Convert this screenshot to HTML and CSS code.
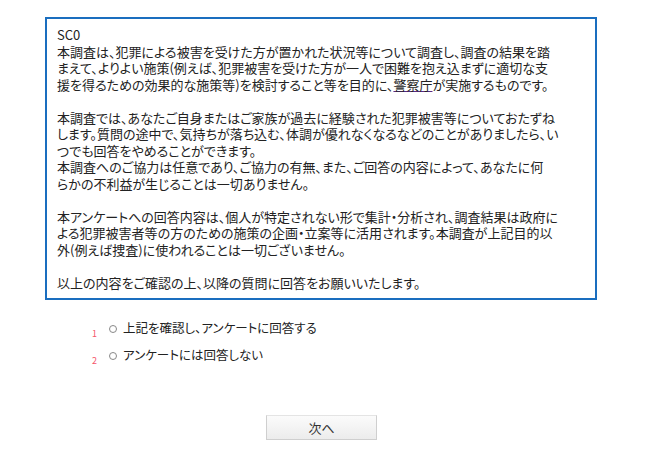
FILE: index.html
```html
<!DOCTYPE html>
<html lang="ja">
<head>
    <meta charset="UTF-8">
    <meta name="viewport" content="width=device-width, initial-scale=1.0">
    <title>犯罪被害に関する調査</title>
    <link rel="stylesheet" href="styles.css">
</head>
<body>
    <div class="survey">
        <!-- 設問文 -->
        <div class="question-box">
            <p>SC0<br>
            本調査は、犯罪による被害を受けた方が置かれた状況等について調査し、調査の結果を踏<br>
            まえて、よりよい施策(例えば、犯罪被害を受けた方が一人で困難を抱え込まずに適切な支<br>
            援を得るための効果的な施策等)を検討すること等を目的に、<a href="#" class="agency">警察庁</a>が実施するものです。</p>

            <p>本調査では、あなたご自身またはご家族が過去に経験された犯罪被害等についておたずね<br>
            します。質問の途中で、気持ちが落ち込む、体調が優れなくなるなどのことがありましたら、い<br>
            つでも回答をやめることができます。<br>
            本調査へのご協力は任意であり、ご協力の有無、また、ご回答の内容によって、あなたに何<br>
            らかの不利益が生じることは一切ありません。</p>

            <p>本アンケートへの回答内容は、個人が特定されない形で集計・分析され、調査結果は政府に<br>
            よる犯罪被害者等の方のための施策の企画・立案等に活用されます。本調査が上記目的以<br>
            外(例えば捜査)に使われることは一切ございません。</p>

            <p>以上の内容をご確認の上、以降の質問に回答をお願いいたします。</p>
        </div>

        <!-- 選択肢 -->
        <div class="choices">
            <label class="choice"><span class="num">1</span><span class="radio"></span>上記を確認し、アンケートに回答する</label>
            <label class="choice"><span class="num">2</span><span class="radio"></span>アンケートには回答しない</label>
        </div>
    </div>

    <div class="nav">
        <button class="next">次へ</button>
    </div>
</body>
</html>
```

FILE: styles.css
```css
body {
    margin: 0;
    padding: 0;
    font-family: "Noto Sans CJK JP", "Noto Sans", sans-serif;
    font-feature-settings: "palt";
    color: #222;
    background-color: #fff;
}

.survey {
    width: 552px;
    margin: 17px 0 0 45px;
}

.question-box {
    border: 2px solid #1a6ebf;
    padding: 8px 4px 7px 10px;
    font-size: 13px;
    line-height: 16.5px;
    white-space: nowrap;
}

.question-box p {
    margin: 0 0 16.5px 0;
}

.question-box p:last-child {
    margin-bottom: 0;
}

.agency {
    color: inherit;
    text-decoration: underline;
    text-decoration-color: #5a2a86;
}

/* 選択肢 */
.choices {
    margin: 14px 0 0 47px;
}

.choice {
    display: block;
    height: 27px;
    line-height: 27px;
    font-size: 12.5px;
}

.num {
    display: inline-block;
    width: 8px;
    font-size: 9px;
    color: #f5566a;
    vertical-align: -4px;
}

.radio {
    display: inline-block;
    width: 6px;
    height: 6px;
    border: 1px solid #888;
    border-radius: 50%;
    margin: 0 6px 0 9px;
    vertical-align: middle;
    position: relative;
    top: -1px;
}

/* ボタン */
.nav {
    text-align: center;
    margin-top: 46px;
}

.next {
    width: 111px;
    height: 25px;
    margin-left: -2px;
    padding: 0;
    font-family: inherit;
    font-size: 13px;
    color: #333;
    border: 1px solid #cfcfcf;
    border-top-color: #e4e4e4;
    background: linear-gradient(#fbfbfb, #ececec);
    cursor: pointer;
}
```
